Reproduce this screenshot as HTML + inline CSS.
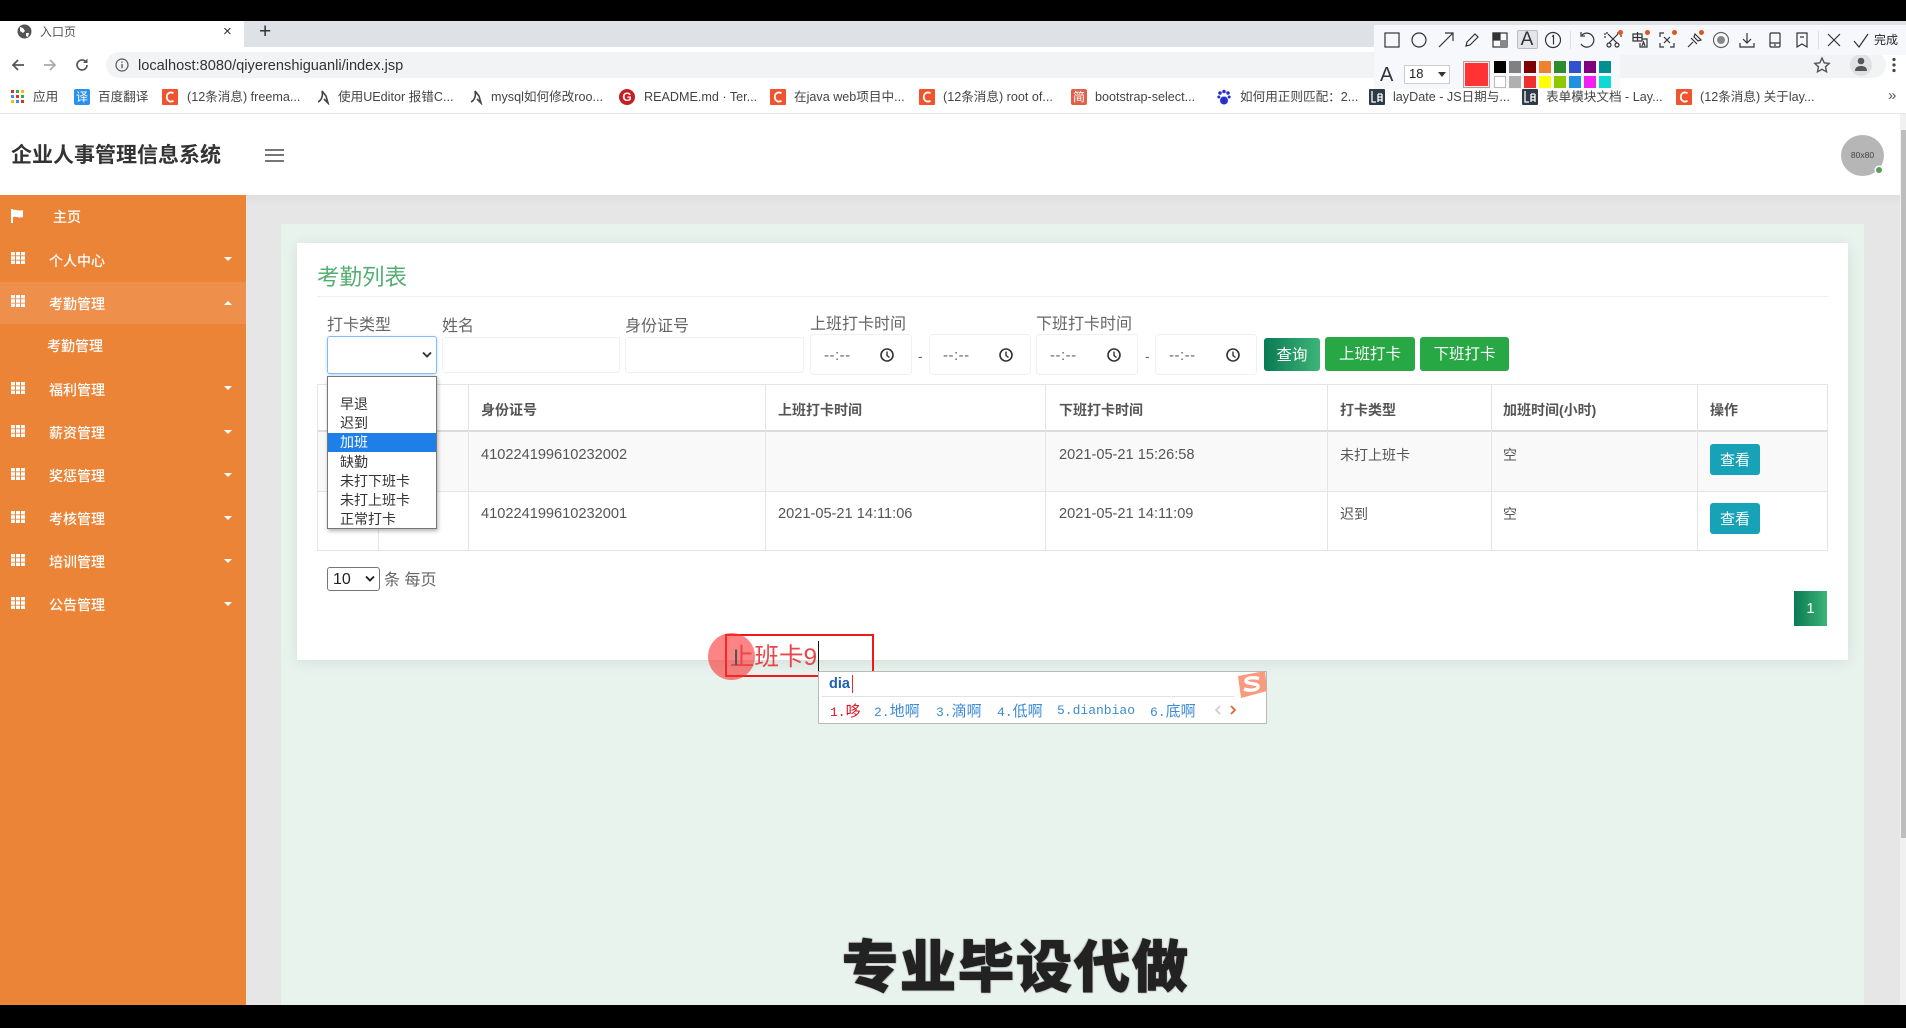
<!DOCTYPE html>
<html lang="zh"><head><meta charset="utf-8"><title>入口页</title>
<style>
*{box-sizing:border-box}
html,body{margin:0;padding:0;width:1906px;height:1028px;overflow:hidden;background:#000;font-family:"Liberation Sans","Noto Sans CJK SC",sans-serif}
#r{position:relative;width:1906px;height:1028px;overflow:hidden;background:#000;filter:blur(.35px)}
#r div,#r span.a,#r svg.a{position:absolute}
.t{white-space:nowrap;line-height:20px;height:20px}
.bm{font-size:12.6px;color:#444;top:87px}
.ic{width:16px;height:16px;top:89px;border-radius:2px;color:#fff;font-size:12px;line-height:16px;text-align:center}
.m{left:49px;font-size:14px;color:#fff;font-weight:500}
.g{left:11px;width:14px;height:12px}
.c{left:224px;width:0;height:0;border-left:4.5px solid transparent;border-right:4.5px solid transparent;border-top:4px solid #fff}
.l{font-size:16px;color:#666}
.in{background:#fff;border:1px solid #f0f0f0;border-radius:3px}
.tm{background:#fff;border:1px solid #f0f0f0;border-radius:4px;top:334px;height:41px;width:102px}
.tx{font-size:15px;color:#666;top:346px;letter-spacing:.5px}
.dash{font-size:14px;color:#666;top:346px}
.v{width:1px;background:#e4e4e4;top:384px;height:167px}
.th{font-size:14px;font-weight:700;color:#555;top:400px}
.td{font-size:14.6px;color:#555}
.op{font-size:14px;color:#333;left:340px;top:0}
.pal{width:12px;height:12px}
.ti{top:31px;width:18px;height:18px;fill:none;stroke:#333;stroke-width:1.2}
.can{top:701px;font-family:"Liberation Mono","Noto Sans CJK SC",monospace;font-size:13px;color:#3b8bd6}
.can b{font-weight:400;font-size:15px;font-family:"Noto Sans CJK SC",sans-serif}
</style></head><body>
<svg width="0" height="0" style="position:absolute"><defs>
<symbol id="gr" viewBox="0 0 14 12"><path fill="#fff" d="M0 0h4v3.4H0zM5 0h4v3.4H5zM10 0h4v3.4h-4zM0 4.3h4v3.4H0zM5 4.3h4v3.4H5zM10 4.3h4v3.4h-4zM0 8.6h4V12H0zM5 8.6h4V12H5zM10 8.6h4V12h-4z"/></symbol>
<symbol id="ck" viewBox="0 0 16 16"><circle cx="8" cy="8" r="6" fill="none" stroke="#333" stroke-width="1.6"/><path d="M8 4.5V8.5L10.5 10.5" fill="none" stroke="#333" stroke-width="1.4"/></symbol>
<symbol id="cs" viewBox="0 0 16 16"><rect width="16" height="16" rx="1" fill="#f0532d"/><path d="M11.5 4.2C8 2.2 4.8 4.5 4.8 8s3.2 5.8 6.7 3.8" fill="none" stroke="#fff" stroke-width="1.8"/></symbol>
<symbol id="jj" viewBox="0 0 16 16"><path d="M3 13C7 11 8 6 7 2L11 7 13 14 9 10" fill="none" stroke="#444" stroke-width="1.6"/></symbol>
<symbol id="ly" viewBox="0 0 16 16"><rect width="16" height="16" rx="1" fill="#2f3a48"/><path d="M3 2v11h4M9 5h4M9 8h4M9 11h4M9 5v8M13 5v8" fill="none" stroke="#fff" stroke-width="1.3"/></symbol>
</defs></svg>
<div id="r">
<!-- browser chrome -->
<div style="left:0;top:21px;width:1906px;height:26px;background:#dee1e6"></div>
<div style="left:0;top:21px;width:244px;height:26px;background:#fff"></div>
<svg class="a" style="left:17px;top:24px" width="15" height="15" viewBox="0 0 15 15"><circle cx="7.5" cy="7.5" r="7" fill="#555"/><path d="M3 3l3 1 2 3-2 2-3-2zM9 9l3 0-1 4-2-1z" fill="#fff"/></svg>
<div class="t" style="left:40px;top:22px;font-size:12px;color:#555">入口页</div>
<div class="t" style="left:223px;top:22px;font-size:15px;color:#333">×</div>
<div class="t" style="left:259px;top:22px;font-size:21px;color:#333">+</div>
<div style="left:0;top:47px;width:1906px;height:66px;background:#fff"></div>
<div style="left:106px;top:52px;width:1780px;height:26px;background:#f1f3f4;border-radius:13px"></div>
<svg class="a" style="left:10px;top:57px" width="16" height="16" viewBox="0 0 16 16"><path d="M14 8H3M8 3L3 8l5 5" fill="none" stroke="#555" stroke-width="1.7"/></svg>
<svg class="a" style="left:42px;top:57px" width="16" height="16" viewBox="0 0 16 16"><path d="M2 8h11M8 3l5 5-5 5" fill="none" stroke="#aaa" stroke-width="1.7"/></svg>
<svg class="a" style="left:74px;top:57px" width="16" height="16" viewBox="0 0 16 16"><path d="M13 8a5 5 0 1 1-1.6-3.7" fill="none" stroke="#555" stroke-width="1.7"/><path d="M13.5 1.5v4.5H9z" fill="#555"/></svg>
<svg class="a" style="left:115px;top:58px" width="14" height="14" viewBox="0 0 14 14"><circle cx="7" cy="7" r="6" fill="none" stroke="#555" stroke-width="1.2"/><path d="M7 6v4.2M7 3.5v1.4" stroke="#555" stroke-width="1.3"/></svg>
<div class="t" style="left:138px;top:56px;font-size:14.6px;color:#333">localhost:8080/qiyerenshiguanli/index.jsp</div>
<svg class="a" style="left:1813px;top:56px" width="18" height="18" viewBox="0 0 18 18"><path d="M9 2l2.2 4.8 5 .6-3.7 3.4 1 5L9 13.3 4.500 15.800l1-5L1.800 7.400l5-.6z" fill="none" stroke="#555" stroke-width="1.4"/></svg>
<div style="left:1850px;top:54px;width:22px;height:22px;border-radius:50%;background:#dfe1e5"></div>
<svg class="a" style="left:1854px;top:57px" width="14" height="14" viewBox="0 0 14 14"><circle cx="7" cy="4" r="3.300" fill="#555"/><path d="M1 14c0-4 3-5 6-5s6 1 6 5z" fill="#555"/></svg>
<svg class="a" style="left:1891px;top:57px" width="6" height="16" viewBox="0 0 6 16"><circle cx="3" cy="2.500" r="1.600" fill="#444"/><circle cx="3" cy="8" r="1.600" fill="#444"/><circle cx="3" cy="13.500" r="1.600" fill="#444"/></svg>
<!-- bookmarks -->
<svg class="a" style="left:11px;top:90px" width="13" height="13" viewBox="0 0 13 13"><path fill="#d93025" d="M0 0h3v3H0z"/><path fill="#34a853" d="M5 0h3v3H5z"/><path fill="#fbbc04" d="M10 0h3v3h-3z"/><path fill="#4285f4" d="M0 5h3v3H0z"/><path fill="#d93025" d="M5 5h3v3H5z"/><path fill="#34a853" d="M10 5h3v3h-3z"/><path fill="#fbbc04" d="M0 10h3v3H0z"/><path fill="#4285f4" d="M5 10h3v3H5z"/><path fill="#d93025" d="M10 10h3v3h-3z"/></svg>
<div class="t bm" style="left:33px">应用</div>
<div class="ic" style="left:74px;background:#2b8ff0">译</div><div class="t bm" style="left:98px">百度翻译</div>
<svg class="a" style="left:162px;top:89px" width="16" height="16"><use href="#cs"/></svg><div class="t bm" style="left:187px">(12条消息) freema...</div>
<svg class="a" style="left:315px;top:89px" width="16" height="16"><use href="#jj"/></svg><div class="t bm" style="left:338px">使用UEditor 报错C...</div>
<svg class="a" style="left:468px;top:89px" width="16" height="16"><use href="#jj"/></svg><div class="t bm" style="left:491px">mysql如何修改roo...</div>
<div class="ic" style="left:619px;background:#c71d23;border-radius:50%;font-weight:700">G</div><div class="t bm" style="left:644px">README.md · Ter...</div>
<svg class="a" style="left:770px;top:89px" width="16" height="16"><use href="#cs"/></svg><div class="t bm" style="left:794px">在java web项目中...</div>
<svg class="a" style="left:919px;top:89px" width="16" height="16"><use href="#cs"/></svg><div class="t bm" style="left:943px">(12条消息) root of...</div>
<div class="ic" style="left:1071px;background:#e0604c">简</div><div class="t bm" style="left:1095px">bootstrap-select...</div>
<svg class="a" style="left:1217px;top:89px" width="14" height="16" viewBox="0 0 14 16"><circle cx="3" cy="4" r="1.800" fill="#2932c8"/><circle cx="7" cy="2.500" r="1.800" fill="#2932c8"/><circle cx="11" cy="4" r="1.800" fill="#2932c8"/><circle cx="1.800" cy="8" r="1.500" fill="#2932c8"/><circle cx="12.200" cy="8" r="1.500" fill="#2932c8"/><ellipse cx="7" cy="11.500" rx="4" ry="4" fill="#2932c8"/></svg><div class="t bm" style="left:1240px">如何用正则匹配：2...</div>
<svg class="a" style="left:1369px;top:89px" width="16" height="16"><use href="#ly"/></svg><div class="t bm" style="left:1393px">layDate - JS日期与...</div>
<svg class="a" style="left:1522px;top:89px" width="16" height="16"><use href="#ly"/></svg><div class="t bm" style="left:1546px">表单模块文档 - Lay...</div>
<svg class="a" style="left:1676px;top:89px" width="16" height="16"><use href="#cs"/></svg><div class="t bm" style="left:1700px">(12条消息) 关于lay...</div>
<div class="t" style="left:1888px;top:86px;font-size:15px;color:#555">»</div>
<!-- app header -->
<div style="left:0;top:113px;width:1906px;height:1px;background:#e4e4e4"></div>
<div style="left:0;top:114px;width:1906px;height:81px;background:#fff"></div>
<div class="t" style="left:11px;top:145px;font-size:21px;font-weight:700;color:#333;line-height:22px;height:22px">企业人事管理信息系统</div>
<div style="left:265px;top:149px;width:19px;height:2px;background:#777"></div>
<div style="left:265px;top:154px;width:19px;height:2px;background:#777"></div>
<div style="left:265px;top:160px;width:19px;height:2px;background:#777"></div>
<div style="left:1841px;top:135px;width:43px;height:41px;border-radius:50%;background:#b6b6b6"></div>
<div class="t" style="left:1841px;top:145px;width:43px;text-align:center;font-size:8.500px;color:#444">80x80</div>
<div style="left:1876px;top:167px;width:6px;height:6px;border-radius:50%;background:#5a9e5a;box-shadow:0 0 0 1.500px #fff"></div>
<!-- content background -->
<div style="left:246px;top:195px;width:1660px;height:810px;background:#e6e6e6"></div>
<div style="left:246px;top:195px;width:1660px;height:10px;background:linear-gradient(#dfdfdf,#e6e6e6)"></div>
<div style="left:281px;top:224px;width:1583px;height:781px;background:#e8f3ee"></div>
<div style="left:1900px;top:114px;width:6px;height:891px;background:#f1f1f1"></div>
<div style="left:1901px;top:130px;width:5px;height:708px;background:#bdbdbd"></div>
<!-- sidebar -->
<div style="left:0;top:195px;width:246px;height:810px;background:#ec8438"></div>
<div style="left:0;top:282px;width:246px;height:42px;background:#ee904c"></div>
<svg class="a" style="left:10px;top:209px" width="14" height="14" viewBox="0 0 14 14"><path fill="#fff" d="M1 0h2v14H1zM3 1c3-1 5 1.500 10 0v7c-5 1.500-7-1-10 0z"/></svg>
<div class="t m" style="left:53px;top:207px">主页</div>
<svg class="a g" style="top:252px"><use href="#gr"/></svg><div class="t m" style="top:251px">个人中心</div><div class="c" style="top:257px"></div>
<svg class="a g" style="top:295px"><use href="#gr"/></svg><div class="t m" style="top:294px">考勤管理</div><div class="c" style="top:301px;border-top:0;border-bottom:4px solid #fff"></div>
<div class="t m" style="left:47px;top:336px">考勤管理</div>
<svg class="a g" style="top:382px"><use href="#gr"/></svg><div class="t m" style="top:380px">福利管理</div><div class="c" style="top:386px"></div>
<svg class="a g" style="top:425px"><use href="#gr"/></svg><div class="t m" style="top:423px">薪资管理</div><div class="c" style="top:430px"></div>
<svg class="a g" style="top:468px"><use href="#gr"/></svg><div class="t m" style="top:466px">奖惩管理</div><div class="c" style="top:473px"></div>
<svg class="a g" style="top:511px"><use href="#gr"/></svg><div class="t m" style="top:509px">考核管理</div><div class="c" style="top:516px"></div>
<svg class="a g" style="top:554px"><use href="#gr"/></svg><div class="t m" style="top:552px">培训管理</div><div class="c" style="top:559px"></div>
<svg class="a g" style="top:597px"><use href="#gr"/></svg><div class="t m" style="top:595px">公告管理</div><div class="c" style="top:602px"></div>
<!-- card -->
<div style="left:297px;top:243px;width:1551px;height:417px;background:#fff;box-shadow:0 2px 14px rgba(0,0,0,.09)"></div>
<div class="t" style="left:317px;top:265px;font-size:22.500px;color:#55ae72;line-height:26px;height:26px">考勤列表</div>
<div style="left:317px;top:296px;width:1511px;height:1px;background:#efefef"></div>
<div class="t l" style="left:327px;top:316px">打卡类型</div>
<div class="t l" style="left:442px;top:317px">姓名</div>
<div class="t l" style="left:625px;top:317px">身份证号</div>
<div class="t l" style="left:810px;top:315px">上班打卡时间</div>
<div class="t l" style="left:1036px;top:315px">下班打卡时间</div>
<div class="in" style="left:442px;top:337px;width:178px;height:36px"></div>
<div class="in" style="left:625px;top:337px;width:179px;height:36px"></div>
<div style="left:327px;top:336px;width:110px;height:38px;background:#fff;border:1px solid #80bdff;border-radius:3px;box-shadow:0 1px 3px rgba(128,189,255,.5)"></div>
<svg class="a" style="left:421px;top:351px" width="12" height="8" viewBox="0 0 12 8"><path d="M2 1.500l4 4 4-4" fill="none" stroke="#333" stroke-width="1.900"/></svg>
<div class="tm" style="left:810px"></div><div class="t tx" style="left:824px">--:--</div><svg class="a" style="left:879px;top:347px" width="16" height="16"><use href="#ck"/></svg>
<div class="t dash" style="left:918px">-</div>
<div class="tm" style="left:929px"></div><div class="t tx" style="left:943px">--:--</div><svg class="a" style="left:998px;top:347px" width="16" height="16"><use href="#ck"/></svg>
<div class="tm" style="left:1036px"></div><div class="t tx" style="left:1050px">--:--</div><svg class="a" style="left:1106px;top:347px" width="16" height="16"><use href="#ck"/></svg>
<div class="t dash" style="left:1145px">-</div>
<div class="tm" style="left:1155px"></div><div class="t tx" style="left:1169px">--:--</div><svg class="a" style="left:1225px;top:347px" width="16" height="16"><use href="#ck"/></svg>
<div style="left:1264px;top:338px;width:56px;height:33px;border-radius:3px;background:linear-gradient(90deg,#0a7a54,#3db577);color:#fff;font-size:15.500px;line-height:35px;text-align:center">查询</div>
<div style="left:1325px;top:337px;width:90px;height:34px;border-radius:3px;background:#28a745;color:#fff;font-size:15.500px;line-height:36px;text-align:center">上班打卡</div>
<div style="left:1420px;top:337px;width:89px;height:34px;border-radius:3px;background:#28a745;color:#fff;font-size:15.500px;line-height:36px;text-align:center">下班打卡</div>
<!-- table -->
<div style="left:317px;top:431px;width:1511px;height:60px;background:#f9f9f9"></div>
<div style="left:317px;top:384px;width:1511px;height:1px;background:#e4e4e4"></div>
<div style="left:317px;top:430px;width:1511px;height:2px;background:#dcdcdc"></div>
<div style="left:317px;top:491px;width:1511px;height:1px;background:#e4e4e4"></div>
<div style="left:317px;top:550px;width:1511px;height:1px;background:#e4e4e4"></div>
<div class="v" style="left:317px"></div><div class="v" style="left:378px"></div><div class="v" style="left:468px"></div><div class="v" style="left:765px"></div><div class="v" style="left:1045px"></div><div class="v" style="left:1327px"></div><div class="v" style="left:1491px"></div><div class="v" style="left:1697px"></div><div class="v" style="left:1827px"></div>
<div class="t th" style="left:481px">身份证号</div>
<div class="t th" style="left:778px">上班打卡时间</div>
<div class="t th" style="left:1059px">下班打卡时间</div>
<div class="t th" style="left:1340px">打卡类型</div>
<div class="t th" style="left:1503px">加班时间(小时)</div>
<div class="t th" style="left:1710px">操作</div>
<div class="t td" style="left:481px;top:445px">410224199610232002</div>
<div class="t td" style="left:1059px;top:445px">2021-05-21 15:26:58</div>
<div class="t td" style="left:1340px;top:445px;font-size:14px">未打上班卡</div>
<div class="t td" style="left:1503px;top:445px;font-size:14px">空</div>
<div style="left:1710px;top:444px;width:50px;height:31px;border-radius:3px;background:#17a2b8;color:#fff;font-size:15px;line-height:33px;text-align:center">查看</div>
<div class="t td" style="left:481px;top:504px">410224199610232001</div>
<div class="t td" style="left:778px;top:504px">2021-05-21 14:11:06</div>
<div class="t td" style="left:1059px;top:504px">2021-05-21 14:11:09</div>
<div class="t td" style="left:1340px;top:504px;font-size:14px">迟到</div>
<div class="t td" style="left:1503px;top:504px;font-size:14px">空</div>
<div style="left:1710px;top:503px;width:50px;height:31px;border-radius:3px;background:#17a2b8;color:#fff;font-size:15px;line-height:33px;text-align:center">查看</div>
<!-- dropdown -->
<div style="left:327px;top:376px;width:110px;height:153px;background:#fff;border:1px solid #777;box-shadow:1px 2px 4px rgba(0,0,0,.3)">
<div style="left:0;top:56px;width:108px;height:19px;background:#1e7fe8"></div>
<div class="t op" style="top:17px;left:12px">早退</div>
<div class="t op" style="top:36px;left:12px">迟到</div>
<div class="t op" style="top:55px;left:12px;color:#fff">加班</div>
<div class="t op" style="top:75px;left:12px">缺勤</div>
<div class="t op" style="top:94px;left:12px">未打下班卡</div>
<div class="t op" style="top:113px;left:12px">未打上班卡</div>
<div class="t op" style="top:132px;left:12px">正常打卡</div>
</div>
<!-- page size -->
<div style="left:327px;top:567px;width:53px;height:24px;background:#fff;border:1px solid #767676;border-radius:3px"></div>
<div class="t" style="left:333px;top:570px;font-size:16px;color:#222">10</div>
<svg class="a" style="left:364px;top:575px" width="12" height="8" viewBox="0 0 12 8"><path d="M2 1.500l4 4 4-4" fill="none" stroke="#222" stroke-width="1.900"/></svg>
<div class="t l" style="left:384px;top:571px">条 每页</div>
<div style="left:1794px;top:591px;width:33px;height:35px;background:linear-gradient(90deg,#0a7a54,#3db577);color:#fff;font-size:15px;line-height:35px;text-align:center">1</div>
<!-- annotation -->
<div style="left:725px;top:634px;width:149px;height:43px;border:2px solid #f01818"></div>
<div style="left:708px;top:633px;width:47px;height:47px;border-radius:50%;background:rgba(250,50,50,.6)"></div>
<div class="t" style="left:730px;top:644px;font-size:24.500px;line-height:28px;height:28px;color:#e8464a">上班卡9</div>
<div style="left:818px;top:641px;width:1px;height:30px;background:#111"></div>
<div class="t" style="left:733px;top:646px;font-size:22px;line-height:24px;height:24px;color:#555">I</div>
<!-- IME -->
<div style="left:818px;top:671px;width:449px;height:53px;background:#fff;border:1px solid #b8b8b8"></div>
<div class="t" style="left:829px;top:674px;font-size:14.500px;font-weight:700;color:#1e60b8">dia</div>
<div style="left:852px;top:675px;width:1px;height:18px;background:#d33"></div>
<div style="left:822px;top:696px;width:412px;height:1px;background:#e2e2e2"></div>
<div class="t can" style="left:830px;color:#e01020">1.<b>哆</b></div>
<div class="t can" style="left:874px">2.<b>地啊</b></div>
<div class="t can" style="left:936px">3.<b>滴啊</b></div>
<div class="t can" style="left:997px">4.<b>低啊</b></div>
<div class="t can" style="left:1057px">5.dianbiao</div>
<div class="t can" style="left:1150px">6.<b>底啊</b></div>
<svg class="a" style="left:1214px;top:704px" width="8" height="12" viewBox="0 0 8 12"><path d="M6 2L2 6l4 4" fill="none" stroke="#ccc" stroke-width="1.600"/></svg>
<svg class="a" style="left:1229px;top:704px" width="8" height="12" viewBox="0 0 8 12"><path d="M2 2l4 4-4 4" fill="none" stroke="#e0662e" stroke-width="1.800"/></svg>
<svg class="a" style="left:1235px;top:670px" width="32" height="29" viewBox="0 0 32 29"><path d="M3 6L30 1l2 20L6 28z" fill="#f79a7e"/><path d="M24 8.500c-5-1.500-13-1-13 2.500s12 1.500 12 5.500-9 4.500-14 2.500" fill="none" stroke="#fff" stroke-width="3.400"/></svg>
<!-- screenshot toolbar -->
<div style="left:1374px;top:25px;width:532px;height:30px;background:#f6f8fc"></div>
<div style="left:1374px;top:55px;width:246px;height:34px;background:#f6f8fc"></div>
<div style="left:1517px;top:30px;width:21px;height:19px;background:#e3e5ea;border:1px solid #bbb;border-radius:2px"></div>
<svg class="a ti" style="left:1383px" viewBox="0 0 18 18"><rect x="2" y="2" width="14" height="14"/></svg>
<svg class="a ti" style="left:1410px" viewBox="0 0 18 18"><circle cx="9" cy="9" r="7"/></svg>
<svg class="a ti" style="left:1437px" viewBox="0 0 18 18"><path d="M2 16L16 2M8 2h8v8"/></svg>
<svg class="a ti" style="left:1463px" viewBox="0 0 18 18"><path d="M3 15l1-4L12 3l3 3-8 8z"/></svg>
<svg class="a ti" style="left:1491px" viewBox="0 0 18 18"><rect x="2" y="2" width="14" height="14"/><path fill="#333" d="M2 2h7v7H2z"/><path fill="#888" stroke="none" d="M9 9h7v7H9z"/></svg>
<div class="t" style="left:1518px;top:30px;font-size:19px;color:#333;width:18px;text-align:center">A</div>
<svg class="a ti" style="left:1544px" viewBox="0 0 18 18"><circle cx="9" cy="9" r="7.500"/><path d="M8 5.500l1.500-1v9"/></svg>
<div style="left:1570px;top:31px;width:1px;height:18px;background:#ddd"></div>
<svg class="a ti" style="left:1577px" viewBox="0 0 18 18"><path d="M5 4a7 7 0 1 1-1 9M4 1v4h4"/></svg>
<svg class="a ti" style="left:1604px" viewBox="0 0 18 18"><path d="M4 3l9 9M14 3l-9 9"/><circle cx="5" cy="14" r="2"/><circle cx="13" cy="14" r="2"/><path d="M1 7V2h4M13 2h4v5" stroke-dasharray="2 1"/></svg>
<svg class="a ti" style="left:1631px" viewBox="0 0 18 18"><path d="M2 3h9v7H2zM6.500 1v9M2 6.500h9M11 8h5v8H9v-4M11 15l1.500-4 1.500 4"/></svg>
<svg class="a ti" style="left:1658px" viewBox="0 0 18 18"><path d="M2 6V2h4M2 12v4h4M12 16h4v-4M6 6l6 6M12 6l-6 6"/></svg>
<svg class="a ti" style="left:1686px" viewBox="0 0 18 18"><path d="M2 16l5-5M5 7l6 6M9 3l6 6-3 1-4-4z"/></svg>
<svg class="a ti" style="left:1712px;stroke:#666" viewBox="0 0 18 18"><circle cx="9" cy="9" r="7.500"/><circle cx="9" cy="9" r="4" fill="#888" stroke="none"/></svg>
<svg class="a ti" style="left:1738px" viewBox="0 0 18 18"><path d="M9 2v10M5 8l4 4 4-4M2 12v4h14v-4"/></svg>
<svg class="a ti" style="left:1766px" viewBox="0 0 18 18"><rect x="4" y="2" width="10" height="14" rx="1"/><path d="M4 12h10M8 14h2"/></svg>
<svg class="a ti" style="left:1793px" viewBox="0 0 18 18"><path d="M4 2h10v14l-5-3-5 3zM7 6h4"/></svg>
<div style="left:1818px;top:31px;width:1px;height:18px;background:#ddd"></div>
<svg class="a ti" style="left:1825px" viewBox="0 0 18 18"><path d="M3 3l12 12M15 3L3 15"/></svg>
<svg class="a ti" style="left:1852px" viewBox="0 0 18 18"><path d="M2 10l5 6L16 3"/></svg>
<div class="t" style="left:1874px;top:30px;font-size:12px;color:#222">完成</div>
<div style="left:1618px;top:30px;width:5px;height:5px;border-radius:50%;background:#e0561c"></div>
<div style="left:1645px;top:30px;width:5px;height:5px;border-radius:50%;background:#e0561c"></div>
<div style="left:1672px;top:30px;width:5px;height:5px;border-radius:50%;background:#e0561c"></div>
<div style="left:1699px;top:30px;width:5px;height:5px;border-radius:50%;background:#e0561c"></div>
<div class="t" style="left:1380px;top:65px;font-size:20px;color:#333">A</div>
<div style="left:1404px;top:65px;width:46px;height:19px;background:#fff;border:1px solid #ccc"></div>
<div class="t" style="left:1409px;top:64px;font-size:13px;color:#222">18</div>
<div style="left:1438px;top:72px;width:0;height:0;border-left:4px solid transparent;border-right:4px solid transparent;border-top:5px solid #333"></div>
<div style="left:1463px;top:61px;width:27px;height:27px;background:#ff3333;border:1px solid #b99;box-shadow:inset 0 0 0 1px #eee"></div>
<div class="pal" style="left:1494px;top:61px;background:#000"></div><div class="pal" style="left:1509px;top:61px;background:#808080"></div><div class="pal" style="left:1524px;top:61px;background:#800000"></div><div class="pal" style="left:1539px;top:61px;background:#f08030"></div><div class="pal" style="left:1554px;top:61px;background:#2d8a2d"></div><div class="pal" style="left:1569px;top:61px;background:#3050d0"></div><div class="pal" style="left:1584px;top:61px;background:#800080"></div><div class="pal" style="left:1599px;top:61px;background:#009090"></div>
<div class="pal" style="left:1494px;top:76px;background:#fff;border:1px solid #bbb"></div><div class="pal" style="left:1509px;top:76px;background:#b0b0b0"></div><div class="pal" style="left:1524px;top:76px;background:#f03030"></div><div class="pal" style="left:1539px;top:76px;background:#ff0"></div><div class="pal" style="left:1554px;top:76px;background:#90c800"></div><div class="pal" style="left:1569px;top:76px;background:#2090e0"></div><div class="pal" style="left:1584px;top:76px;background:#f020f0"></div><div class="pal" style="left:1599px;top:76px;background:#10d8d8"></div>
<!-- watermark -->
<div class="t" style="left:842px;top:934px;height:68px;line-height:68px;font-size:56px;font-weight:900;letter-spacing:2px;color:#222;-webkit-text-stroke:1px #222;text-shadow:0 0 2px #aaa,1px 1px 1px #bbb,-1px -1px 1px #bbb">专业毕设代做</div>
<!-- bottom bar -->
<div style="left:0;top:1005px;width:1906px;height:23px;background:#000"></div>
</div>
</body></html>
